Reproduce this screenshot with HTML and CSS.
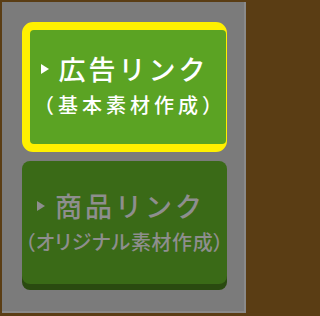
FILE: index.html
```html
<!DOCTYPE html>
<html lang="ja">
<head>
<meta charset="utf-8">
<link rel="stylesheet" href="styles.css">
</head>
<body>
<div class="panel">
  <a class="btn btn-active">
    <span class="btn-face">
      <span class="title"><span class="arrow"></span>広告リンク</span>
      <span class="sub sub-wide">（基本素材作成）</span>
    </span>
  </a>
  <a class="btn btn-disabled">
    <span class="title"><span class="arrow"></span>商品リンク</span>
    <span class="sub sub-narrow">（オリジナル素材作成）</span>
  </a>
</div>
</body>
</html>
```
FILE: styles.css
```css
html, body {
  margin: 0;
  padding: 0;
}
html {
  background: #5a3d14;
}
body {
  width: 250px;
  height: 316px;
  background: #5a3d14;
  font-family: "Noto Sans CJK JP", "Noto Sans", sans-serif;
  overflow: hidden;
}
.panel {
  margin: 2px 4px 3px 2px;
  height: 311px;
  background: #7b7b7b;
  box-shadow: inset -2px -2px 0 #8a8a8a;
  box-sizing: border-box;
  padding: 20px 0 0 20px;
  display: flex;
  flex-direction: column;
  gap: 9px;
}
.btn {
  display: flex;
  width: 205px;
  box-sizing: border-box;
  text-decoration: none;
}
.btn-active {
  height: 130px;
  border: 8px solid #fff000;
  border-radius: 11px;
  background: #fff000;
}
.btn-face {
  flex: 1;
  background: #5ba323;
  border-radius: 4px;
  display: flex;
  flex-direction: column;
  align-items: center;
  justify-content: center;
  color: #ffffff;
  padding-bottom: 5px;
}
.btn-disabled {
  height: 123px;
  background: #3a6a17;
  border-radius: 8px;
  box-shadow: 0 6px 0 #2a4a10;
  flex-direction: column;
  align-items: center;
  justify-content: center;
  color: #8e8e8e;
  padding-bottom: 2px;
}
.title {
  display: flex;
  align-items: center;
  font-size: 27px;
  font-weight: 500;
  letter-spacing: 3px;
  line-height: 34px;
  white-space: nowrap;
  margin-right: 7px;
}
.arrow {
  width: 0;
  height: 0;
  border-left: 8px solid currentColor;
  border-top: 5px solid transparent;
  border-bottom: 5px solid transparent;
  margin-right: 10px;
  margin-top: 1px;
}
.sub {
  font-size: 20px;
  font-weight: 500;
  line-height: 26px;
  white-space: nowrap;
  margin-top: 6px;
}
.sub-wide {
  letter-spacing: 4px;
  margin-left: 4px;
}
.sub-narrow {
  letter-spacing: 0.6px;
  font-feature-settings: "palt";
}
```
